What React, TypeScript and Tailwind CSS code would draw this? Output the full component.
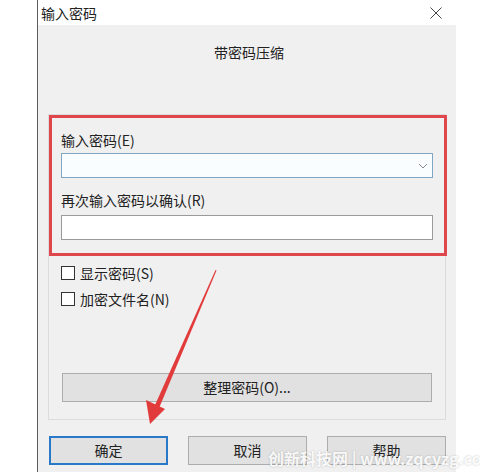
import React from "react";

const cjk = { fontFamily: '"Noto Sans CJK SC", "Noto Sans", sans-serif' };

function CheckRow({ label }: { label: string }) {
  return (
    <div className="flex items-center h-[20px]">
      <span className="w-[14px] h-[14px] border border-[#333] bg-white" />
      <span className="ml-[5px] text-[14px] leading-[20px] text-[#222]">{label}</span>
    </div>
  );
}

function Btn({ label, primary }: { label: string; primary?: boolean }) {
  return (
    <div
      className={
        "w-[119px] h-[29px] flex items-center justify-center bg-[#e1e1e1] text-[14px] text-[#222] " +
        (primary ? "border-2 border-[#2a78c8]" : "border border-[#adadad]")
      }
    >
      {label}
    </div>
  );
}

export default function App() {
  return (
    <div className="relative w-[480px] h-[472px] bg-white overflow-hidden" style={cjk}>
      <div className="ml-[37px] w-[419px] h-[472px] border-l border-[#5c5c5c] flex flex-col">
        {/* title bar */}
        <div className="h-[25px] bg-white flex items-center justify-between pl-[3px] pr-[14px]">
          <span className="text-[14px] leading-[20px] text-[#222]">输入密码</span>
          <svg width="12" height="12" viewBox="0 0 12 12">
            <path d="M0.5 0.5 L11.5 11.5 M11.5 0.5 L0.5 11.5" stroke="#444" strokeWidth="1" fill="none" />
          </svg>
        </div>

        <div className="flex-1 bg-[#f0f0f0] flex flex-col">
          <div className="pt-[17px] text-center text-[14px] leading-[20px] text-[#222] pl-[4px]">带密码压缩</div>

          {/* group box */}
          <div className="mt-[52px] ml-[10px] w-[398px] border border-[#dcdcdc] pb-[17px]">
            <div className="w-[398px] border-[3px] border-[#e0474c] pl-[9px] pt-[12px] pb-[13px]">
              <div className="text-[14px] leading-[20px] text-[#222]">输入密码(E)</div>
              <div className="mt-[3px] w-[372px] h-[25px] border border-[#7fa6c2] bg-[#fafdff] flex items-center justify-end pr-[4px]">
                <svg width="10" height="6" viewBox="0 0 10 6">
                  <path d="M1 1 L5 5 L9 1" stroke="#888" strokeWidth="1" fill="none" />
                </svg>
              </div>
              <div className="mt-[12px] text-[14px] leading-[20px] text-[#222]">再次输入密码以确认(R)</div>
              <div className="mt-[5px] w-[372px] h-[25px] border border-[#9a9a9a] bg-white" />
            </div>

            <div className="pl-[12px] mt-[7px]">
              <CheckRow label="显示密码(S)" />
              <div className="mt-[6px]">
                <CheckRow label="加密文件名(N)" />
              </div>
            </div>

            <div className="mt-[64px] ml-[13px] w-[370px] h-[29px] bg-[#e1e1e1] border border-[#adadad] flex items-center justify-center text-[14px] text-[#222]">
              整理密码(O)...
            </div>
          </div>

          {/* bottom buttons */}
          <div className="mt-[16px] ml-[11px] flex gap-[20px]">
            <Btn label="确定" primary />
            <Btn label="取消" />
            <Btn label="帮助" />
          </div>
        </div>
      </div>

      {/* red annotation arrow */}
      <svg className="absolute left-0 top-0" width="480" height="472" viewBox="0 0 480 472">
        <polygon points="215.5,270 216.5,270.5 159.5,407 155,405" fill="#e23b3b" />
        <polygon points="150,424 146,400 165,409" fill="#e23b3b" />
      </svg>

      {/* watermark */}
      <div
        className="absolute left-[268px] top-[447px] whitespace-nowrap text-[16px] leading-[22px] font-bold text-white/90"
        style={{ textShadow: "0 0 2px rgba(0,0,0,0.25)" }}
      >
        创新科技网 | www.zqcyzg.com
      </div>
    </div>
  );
}
